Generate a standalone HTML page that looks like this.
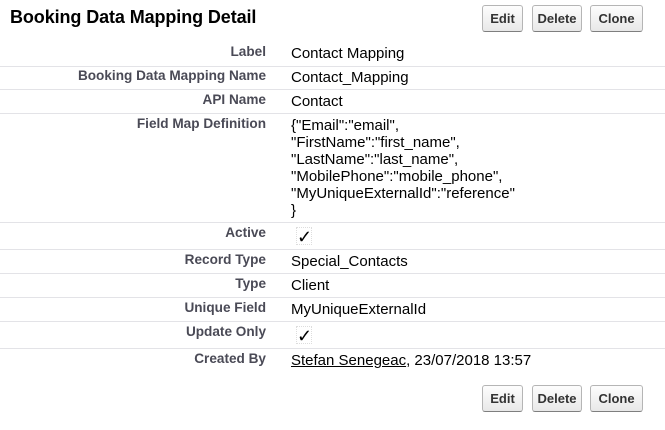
<html><head><style>
body{margin:0;background:#fff;font-family:"Liberation Sans",Arial,sans-serif;width:665px;height:430px;position:relative;overflow:hidden}
h2{position:absolute;left:10px;top:7px;margin:0;font-size:18px;font-weight:bold;color:#000;letter-spacing:-0.1px}
.btn{position:absolute;height:27px;box-sizing:border-box;border:1px solid #b5b5b5;border-bottom-color:#7f7f7f;border-radius:3px;background:linear-gradient(#fdfdfd,#e8e8e8);font-weight:bold;font-size:13px;color:#333;text-align:center;line-height:25px}
.row{position:absolute;left:0;width:665px;border-bottom:1px solid #e3e3e7}
.l{position:absolute;right:399px;top:2px;font-weight:bold;font-size:13.6px;color:#4a4a56;white-space:nowrap}
.v{position:absolute;left:291px;top:3px;font-size:15px;color:#000;line-height:17px;white-space:nowrap}
.ck{font-size:18px;line-height:18px;width:14px;height:16px;border:1px dotted #ddd}
</style></head><body>
<h2>Booking Data Mapping Detail</h2>
<div class="btn" style="left:482px;top:5px;width:41px">Edit</div>
<div class="btn" style="left:532px;top:5px;width:50px">Delete</div>
<div class="btn" style="left:590px;top:5px;width:53px">Clone</div>
<div class="row" style="top:42px;height:24px"><div class="l">Label</div><div class="v">Contact Mapping</div></div>
<div class="row" style="top:66px;height:23px"><div class="l">Booking Data Mapping Name</div><div class="v">Contact_Mapping</div></div>
<div class="row" style="top:90px;height:23px"><div class="l">API Name</div><div class="v">Contact</div></div>
<div class="row" style="top:114px;height:108px"><div class="l">Field Map Definition</div><div class="v">{"Email":"email",<br>"FirstName":"first_name",<br>"LastName":"last_name",<br>"MobilePhone":"mobile_phone",<br>"MyUniqueExternalId":"reference"<br>}</div></div>
<div class="row" style="top:223px;height:26px"><div class="l">Active</div><div class="v ck" style="left:296px;top:4px">✓</div></div>
<div class="row" style="top:250px;height:23px"><div class="l">Record Type</div><div class="v">Special_Contacts</div></div>
<div class="row" style="top:274px;height:23px"><div class="l">Type</div><div class="v">Client</div></div>
<div class="row" style="top:298px;height:23px"><div class="l">Unique Field</div><div class="v">MyUniqueExternalId</div></div>
<div class="row" style="top:322px;height:26px"><div class="l">Update Only</div><div class="v ck" style="left:296px;top:4px">✓</div></div>
<div class="row" style="top:349px;height:26px;border:0"><div class="l">Created By</div><div class="v"><u>Stefan Senegeac</u>, 23/07/2018 13:57</div></div>
<div class="btn" style="left:482px;top:385px;width:41px">Edit</div>
<div class="btn" style="left:532px;top:385px;width:50px">Delete</div>
<div class="btn" style="left:590px;top:385px;width:53px">Clone</div>
</body></html>
